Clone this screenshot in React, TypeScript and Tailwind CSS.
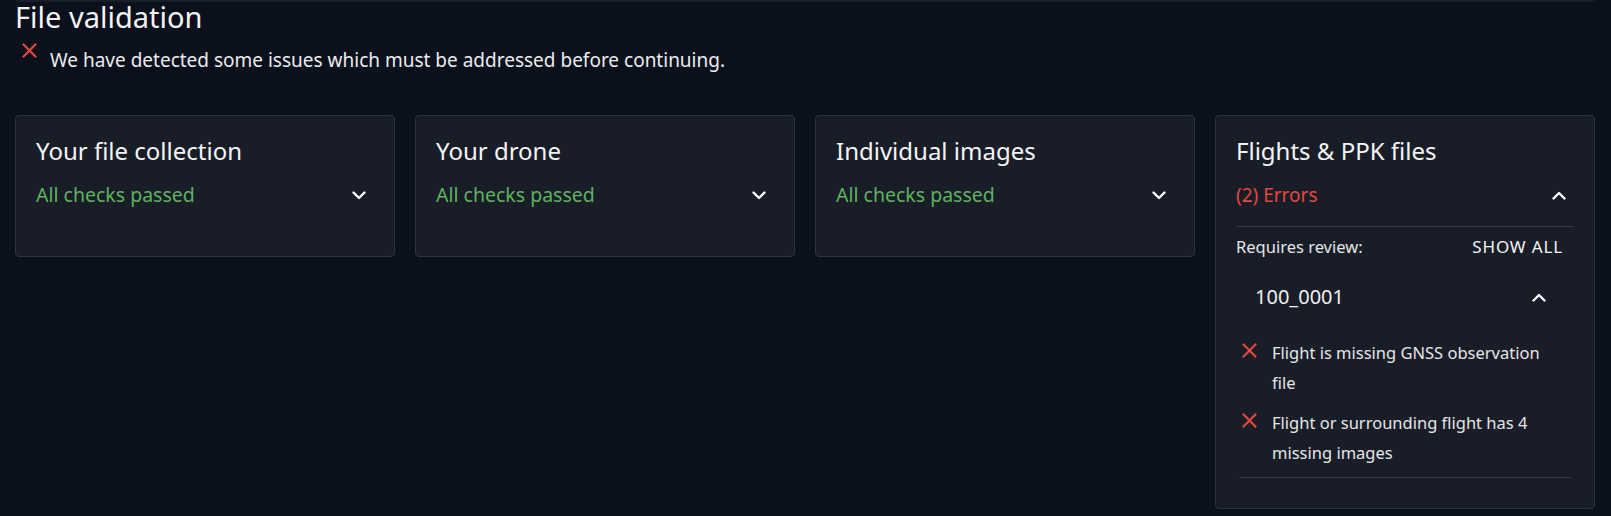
import React from "react";

const font = { fontFamily: "'Noto Sans', 'Open Sans', sans-serif" };

function Chevron({ up = false }: { up?: boolean }) {
  return (
    <svg width="14" height="9" viewBox="0 0 14 9" className="shrink-0">
      <polyline
        points={up ? "1.5,7.5 7,2 12.5,7.5" : "1.5,1.5 7,7 12.5,1.5"}
        fill="none"
        stroke="#ffffff"
        strokeWidth="2.4"
        strokeLinecap="round"
        strokeLinejoin="round"
      />
    </svg>
  );
}

function Cross({ size = 14 }: { size?: number }) {
  return (
    <svg width={size} height={size} viewBox="0 0 14 14" className="shrink-0">
      <path d="M1.5 1.5 L12.5 12.5 M12.5 1.5 L1.5 12.5" stroke="#e5483d" strokeWidth="2" strokeLinecap="square" />
    </svg>
  );
}

function PassedCard({ title }: { title: string }) {
  return (
    <section className="w-[380px] shrink-0 rounded-[4px] border border-[#2c323e] bg-[#181d28] px-[20px] pt-[19px] pb-[46px]">
      <h2 className="text-[24px] leading-[32px] text-[#f4f4f5]">{title}</h2>
      <div className="mt-[13px] flex h-[30px] items-center justify-between pr-[8px]">
        <span className="text-[19.5px] text-[#5db45f]">All checks passed</span>
        <Chevron />
      </div>
    </section>
  );
}

const issues = [
  "Flight is missing GNSS observation file",
  "Flight or surrounding flight has 4 missing images",
];

export default function App() {
  return (
    <div style={font} className="h-[516px] w-[1611px] overflow-hidden bg-[#0a101c] text-white">
      <div className="mx-[16px] h-[2px] rounded-b-[3px] bg-[#181d28]" />
      <div className="px-[15px]">
        <h1 className="text-[29px] leading-[30px] text-[#f4f4f5]">File validation</h1>
        <div className="mt-[10px] flex items-start gap-[13px] pl-[7px]">
          <div className="pt-[1px]">
            <Cross size={15} />
          </div>
          <p className="mt-[7px] text-[19px] leading-[22px] text-[#ececec]">
            We have detected some issues which must be addressed before continuing.
          </p>
        </div>

        <div className="mt-[44px] flex items-start gap-[20px]">
          <PassedCard title="Your file collection" />
          <PassedCard title="Your drone" />
          <PassedCard title="Individual images" />

          <section className="w-[380px] shrink-0 rounded-[4px] border border-[#2c323e] bg-[#181d28] px-[20px] pt-[19px] pb-[30px]">
            <h2 className="text-[24px] leading-[32px] text-[#f4f4f5]">Flights &amp; PPK files</h2>
            <div className="mt-[13px] flex h-[30px] items-center justify-between pr-[8px]">
              <span className="text-[19px] text-[#e5483d]">(2) Errors</span>
              <Chevron up />
            </div>
            <div className="mt-[16px] h-px bg-[#343a46]" />
            <div className="mt-[5px] flex h-[30px] items-center justify-between pr-[11px]">
              <span className="text-[16.5px] text-[#e6e6e6]">Requires review:</span>
              <button className="text-[17px] tracking-[0.05em] text-[#f4f4f5]">SHOW ALL</button>
            </div>
            <div className="mt-[15px] flex h-[40px] items-center justify-between pl-[19px] pr-[28px]">
              <span className="text-[20px] text-[#f0f0f0]">100_0001</span>
              <Chevron up />
            </div>
            <ul className="mt-[21px] flex flex-col gap-[10px] pl-[6px]">
              {issues.map((text) => (
                <li key={text} className="flex items-start gap-[15px]">
                  <div className="pt-[5px]">
                    <Cross size={15} />
                  </div>
                  <span className="max-w-[283px] text-[16.5px] leading-[30px] text-[#e6e6e6]">{text}</span>
                </li>
              ))}
            </ul>
            <div className="mx-[3px] mt-[9px] h-px bg-[#343a46]" />
          </section>
        </div>
      </div>
    </div>
  );
}
